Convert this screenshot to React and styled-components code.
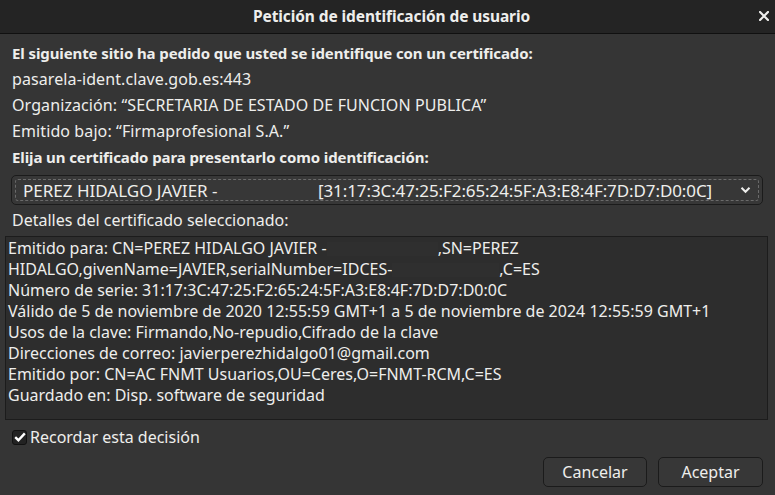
import React from "react";
import styled, { createGlobalStyle } from "styled-components";

const GlobalStyle = createGlobalStyle`
  html, body {
    margin: 0;
    padding: 0;
    background: #353535;
  }
  * { box-sizing: border-box; }
`;

const fontStack = `"Noto Sans", "Open Sans", "DejaVu Sans", sans-serif`;

const detailLines = [
    ["Emitido para: CN=PEREZ HIDALGO JAVIER -", 111, ",SN=PEREZ"],
    ["HIDALGO,givenName=JAVIER,serialNumber=IDCES-", 107, ",C=ES"],
    ["Número de serie: 31:17:3C:47:25:F2:65:24:5F:A3:E8:4F:7D:D7:D0:0C"],
    ["Válido de 5 de noviembre de 2020 12:55:59 GMT+1 a 5 de noviembre de 2024 12:55:59 GMT+1"],
    ["Usos de la clave: Firmando,No-repudio,Cifrado de la clave"],
    ["Direcciones de correo: javierperezhidalgo01@gmail.com"],
    ["Emitido por: CN=AC FNMT Usuarios,OU=Ceres,O=FNMT-RCM,C=ES"],
    ["Guardado en: Disp. software de seguridad"],
];

function App() {
    return <>
        <GlobalStyle />
        <Window>
            <TitleBar>
                <Title>Petición de identificación de usuario</Title>
                <CloseButton aria-label="Cerrar">
                    <svg width="10" height="10" viewBox="0 0 10 10">
                        <path d="M1 1 L9 9 M9 1 L1 9" stroke="#eeeeec" strokeWidth="2.2" strokeLinecap="square" />
                    </svg>
                </CloseButton>
            </TitleBar>

            <Content>
                <InfoLine $bold>El siguiente sitio ha pedido que usted se identifique con un certificado:</InfoLine>
                <InfoLine>pasarela-ident.clave.gob.es:443</InfoLine>
                <InfoLine>Organización: “SECRETARIA DE ESTADO DE FUNCION PUBLICA”</InfoLine>
                <InfoLine>Emitido bajo: “Firmaprofesional S.A.”</InfoLine>
                <InfoLine $bold>Elija un certificado para presentarlo como identificación:</InfoLine>

                <Combo>
                    <ComboFocus>
                        <ComboName>PEREZ HIDALGO JAVIER -</ComboName>
                        <ComboSerial>[31:17:3C:47:25:F2:65:24:5F:A3:E8:4F:7D:D7:D0:0C]</ComboSerial>
                        <Chevron width="11" height="8" viewBox="0 0 11 8">
                            <path d="M1.5 1.8 L5.5 5.8 L9.5 1.8" fill="none" stroke="#eeeeec" strokeWidth="2" />
                        </Chevron>
                    </ComboFocus>
                </Combo>

                <SectionLabel>Detalles del certificado seleccionado:</SectionLabel>
            </Content>

            <Details>
                {detailLines.map(([text, gap, tail], i) => (
                    <DetailLine key={i}>
                        {text}
                        {gap && <Redacted style={{ width: gap }} />}
                        {tail}
                    </DetailLine>
                ))}
            </Details>

            <CheckRow>
                <CheckBox>
                    <svg width="12" height="10" viewBox="0 0 12 10">
                        <path d="M1.2 5.2 L4.4 8.2 L10.8 1.4" fill="none" stroke="#ffffff" strokeWidth="2.4" />
                    </svg>
                </CheckBox>
                <CheckLabel>Recordar esta decisión</CheckLabel>
            </CheckRow>

            <ButtonRow>
                <DialogButton $width={104}>Cancelar</DialogButton>
                <DialogButton $width={105}>Aceptar</DialogButton>
            </ButtonRow>
        </Window>
    </>;
}

const Window = styled.div`
    width: 775px;
    height: 495px;
    background: #353535;
    color: #eeeeec;
    font-family: ${fontStack};
    overflow: hidden;
    display: flex;
    flex-direction: column;
`

const TitleBar = styled.div`
    position: relative;
    height: 34px;
    flex-shrink: 0;
    background: #242424;
    border-bottom: 1px solid #101010;
    display: flex;
    align-items: center;
    justify-content: center;
`

const Title = styled.div`
    font-size: 15.5px;
    font-weight: 700;
    letter-spacing: -0.1px;
    color: #eeeeec;
    margin: -1px 0 0 8px;
`

const CloseButton = styled.div`
    position: absolute;
    right: 6px;
    top: 11px;
    width: 10px;
    height: 10px;
    display: flex;
`

const Content = styled.div`
    padding: 6px 12px 0 12px;
    display: flex;
    flex-direction: column;
`

const InfoLine = styled.div`
    font-size: ${p => p.$bold ? 15 : 16}px;
    letter-spacing: ${p => p.$bold ? "-0.1px" : "0.1px"};
    line-height: 26px;
    font-weight: ${p => p.$bold ? 700 : 400};
    white-space: nowrap;
`

const Combo = styled.div`
    margin: 5px 0 0 -1px;
    height: 30px;
    width: 752px;
    border: 1px solid #1b1b1b;
    border-radius: 5px;
    background: #373737;
    padding: 3px;
`

const ComboFocus = styled.div`
    height: 100%;
    border: 1px dashed #6a6a6a;
    border-radius: 3px;
    display: flex;
    align-items: center;
    padding-left: 7px;
    padding-right: 7px;
    font-size: 17px;
`

const ComboName = styled.span`
    width: 295px;
`

const ComboSerial = styled.span`
    flex: 1;
    letter-spacing: -0.1px;
`

const Chevron = styled.svg`
    flex-shrink: 0;
`

const SectionLabel = styled.div`
    font-size: 16px;
    line-height: 28px;
    margin-top: 1px;
`

const Details = styled.div`
    margin: 2px 7px 0 5px;
    height: 184px;
    border: 1px solid #1c1c1c;
    background: #2d2d2d;
    padding: 0 0 0 2px;
    display: flex;
    flex-direction: column;
`

const DetailLine = styled.div`
    font-size: 16px;
    line-height: 21px;
    white-space: nowrap;
    display: flex;
    align-items: center;
    &:first-child { margin-top: 1px; }
`

const Redacted = styled.span`
    display: inline-block;
    height: 14px;
    background: #2f2f2f;
`

const CheckRow = styled.div`
    display: flex;
    align-items: center;
    gap: 3px;
    padding: 8px 0 0 12px;
`

const CheckBox = styled.div`
    width: 15px;
    height: 15px;
    border: 1px solid #111111;
    border-radius: 3px;
    background: #222222;
    display: flex;
    align-items: center;
    justify-content: center;
`

const CheckLabel = styled.span`
    font-size: 16px;
    line-height: 18px;
`

const ButtonRow = styled.div`
    display: flex;
    justify-content: flex-end;
    gap: 11px;
    padding: 11px 12px 0 0;
`

const DialogButton = styled.div`
    width: ${p => p.$width}px;
    height: 30px;
    border: 1px solid #1b1b1b;
    border-radius: 5px;
    background: #373737;
    display: flex;
    align-items: center;
    justify-content: center;
    font-size: 16px;
    padding-bottom: 1px;
`

export default App;
